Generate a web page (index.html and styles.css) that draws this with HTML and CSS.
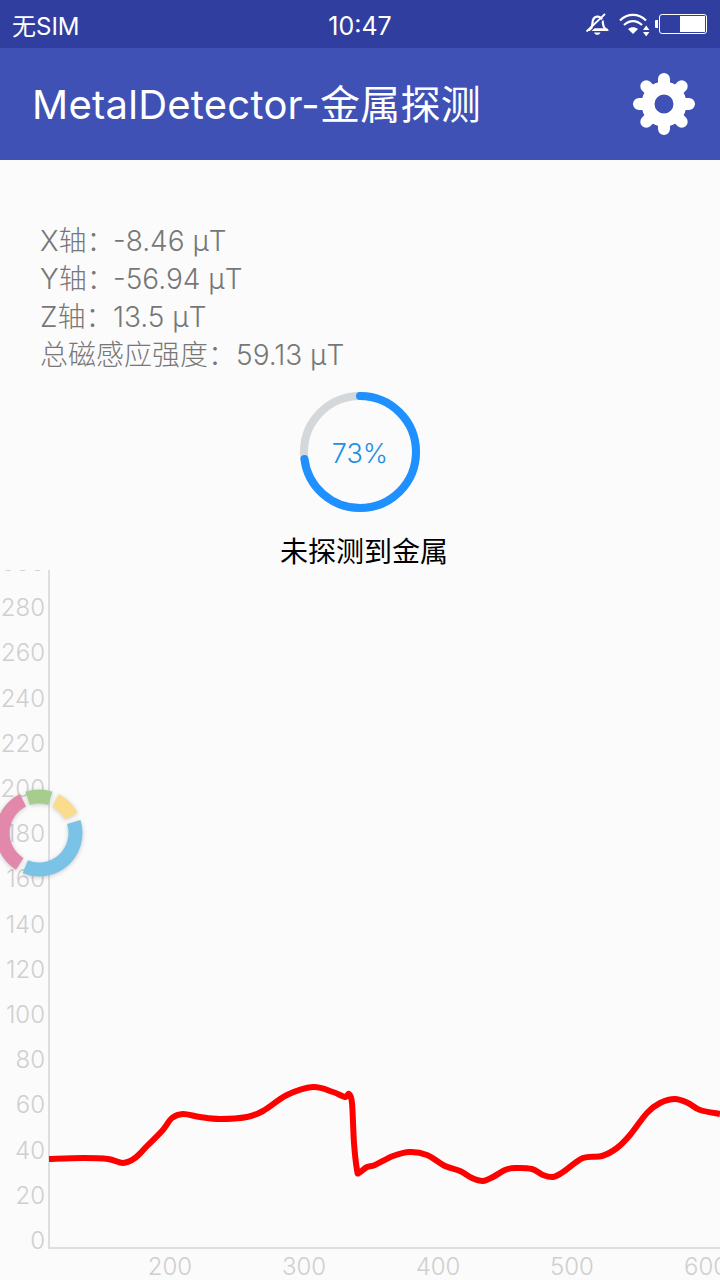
FILE: index.html
```html
<!DOCTYPE html>
<html lang="zh-CN">
<head>
  <meta charset="UTF-8" />
  <title>MetalDetector-金属探测</title>
  <meta name="viewport" content="width=device-width, initial-scale=1.0" />
  <link rel="stylesheet" href="styles.css">
</head>
<body>
  <div class="status-bar">
    <span class="carrier">无SIM</span>
    <span class="clock">10:47</span>
    <div class="status-icons">
      <svg class="icon-bell" width="24" height="24" viewBox="0 0 24 24">
        <path d="M5 17.500c2-1.600 2.400-3.400 2.500-6.500.1-3.500 2-5.800 4.500-6.300 3-.5 5.500 1.800 5.800 5.300.2 3.300.8 5.800 3.200 7.500z" fill="none" stroke="#fff" stroke-width="2.200"/>
        <path d="M4 16.500h18.500l.5 2.500H3.500z" fill="#fff"/>
        <path d="M9 20.500h6.500c-.6 1.500-1.800 2.300-3.200 2.300S9.600 22 9 20.500z" fill="#fff"/>
        <path d="M1.500 19.500L20 2" stroke="#fff" stroke-width="1.800"/>
        <path d="M3 21.500L21.500 4" stroke="#303f9f" stroke-width="1.200"/>
      </svg>
      <svg class="icon-wifi" width="32" height="24" viewBox="0 0 32 24">
        <path d="M1 8.500c7.500-7.500 18.500-7.500 26 0M5 13c5.500-5.300 12.500-5.300 18 0" fill="none" stroke="#fff" stroke-width="2.200"/>
        <path d="M9 17c3-2.500 7-2.500 10 0l-5 5z" fill="#fff"/>
        <path d="M24 18l3.200-4.500 3.200 4.500zM24 20h6.400l-3.200 4.500z" fill="#fff"/>
      </svg>
      <div class="battery">
        <div class="battery-nub"></div>
        <div class="battery-body"><div class="battery-level"></div></div>
      </div>
    </div>
  </div>

  <header class="app-bar">
    <h1>MetalDetector-金属探测</h1>
    <svg class="icon-gear" width="64" height="64" viewBox="-32 -32 64 64">
      <g stroke="#fff" stroke-width="12" stroke-linecap="round">
        <path d="M0-20V-25M0 20V25M-20 0H-25M20 0H25"/>
        <path d="M14.100-14.100L17.700-17.700M-14.100-14.100L-17.700-17.700M14.100 14.100L17.700 17.700M-14.100 14.100L-17.700 17.700"/>
      </g>
      <circle r="16" fill="none" stroke="#fff" stroke-width="13"/>
    </svg>
  </header>

  <main>
    <div class="readings">
      <p><span class="label">X轴：</span>-8.46 μT</p>
      <p><span class="label">Y轴：</span>-56.94 μT</p>
      <p><span class="label">Z轴：</span>13.5 μT</p>
      <p><span class="label-total">总磁感应强度：</span>59.13 μT</p>
    </div>

    <div class="progress">
      <svg width="120" height="120" viewBox="0 0 120 120">
        <circle cx="60" cy="60" r="56" fill="none" stroke="#d5d8da" stroke-width="8"/>
        <circle class="progress-bar" cx="60" cy="60" r="56" pathLength="100"/>
      </svg>
      <span class="progress-text">73%</span>
    </div>
    <p class="result">未探测到金属</p>

    <svg id="chart" class="chart" width="720" height="710" viewBox="0 570 720 710">
      <g id="y-labels" class="tick-labels y-labels"></g>
      <g id="x-labels" class="tick-labels x-labels"></g>
      <path class="axis" d="M49 570V1248H720"/>
      <path id="line" class="line"/>
    </svg>

    <svg class="float-ball" width="100" height="100" viewBox="-50 -50 100 100">
      <g fill="none" stroke-width="14">
        <path stroke="#e288aa" d="M-19.300 30.900A36.500 36.500 0 0 1-16 -32.800"/>
        <path stroke="#a6cd8d" d="M-11.300 -34.700A36.500 36.500 0 0 1 11.300 -34.700"/>
        <path stroke="#fbdc8c" d="M16.600 -32.500A36.500 36.500 0 0 1 32.200 -17.100"/>
        <path stroke="#7bc2e7" d="M34.800 -11A36.500 36.500 0 0 1-13.700 33.800"/>
      </g>
    </svg>
  </main>

  <script src="chart.js"></script>
</body>
</html>
```

FILE: styles.css
```css
* {
  box-sizing: border-box;
}
body {
  font-family: 'Inter', 'Noto Sans CJK SC', sans-serif;
  margin: 0;
  padding: 0;
  width: 720px;
  height: 1280px;
  overflow: hidden;
  background-color: #fbfbfb;
}
.status-bar {
  display: flex;
  align-items: center;
  justify-content: space-between;
  position: relative;
  height: 48px;
  padding: 0 12px;
  background-color: #303f9f;
  color: white;
  font-size: 24px;
}
.clock {
  position: absolute;
  left: 0;
  right: 0;
  margin-top: 4px;
  text-align: center;
  font-size: 25px;
}
.status-icons {
  display: flex;
  align-items: center;
  gap: 10px;
  margin-left: auto;
  margin-right: 1px;
}
.battery {
  display: flex;
  align-items: center;
  margin-left: -6px;
}
.battery-nub {
  width: 3px;
  height: 8px;
  background-color: white;
  border-radius: 1px 0 0 1px;
}
.battery-body {
  display: flex;
  justify-content: flex-end;
  width: 48px;
  height: 20px;
  margin-left: 1px;
  padding: 1px;
  border: 1px solid white;
  border-radius: 3px;
}
.battery-level {
  width: 25px;
  background-color: white;
}
.app-bar {
  display: flex;
  align-items: center;
  justify-content: space-between;
  height: 112px;
  padding: 0 24px 0 32px;
  background-color: #3f51b5;
  color: white;
}
.app-bar h1 {
  margin: -4px 0 0;
  font-size: 40px;
  font-weight: 400;
  letter-spacing: 0.25px;
}
main {
  position: relative;
}
.readings {
  padding: 62px 0 0 40px;
  color: #777;
  font-size: 28px;
  font-weight: 300;
  line-height: 38px;
}
.readings p {
  margin: 0;
}
.label {
  display: inline-block;
  width: 73px;
  white-space: nowrap;
}
.progress {
  position: relative;
  display: flex;
  align-items: center;
  justify-content: center;
  width: 120px;
  height: 120px;
  margin: 18px auto 0;
}
.progress svg {
  position: absolute;
  left: 0;
  top: 0;
}
.progress-bar {
  fill: none;
  stroke: #1e90ff;
  stroke-width: 8;
  stroke-linecap: round;
  stroke-dasharray: 73 100;
  transform: rotate(-90deg);
  transform-origin: 60px 60px;
}
.progress-text {
  position: relative;
  top: 1px;
  color: #1e8fe6;
  font-size: 27px;
  font-weight: 300;
}
.result {
  margin: 23px 0 0 8px;
  height: 35px;
  text-align: center;
  color: black;
  font-size: 28px;
  line-height: 35px;
}
.chart {
  display: block;
}
.tick-labels {
  fill: #cfcfcf;
  font-size: 24px;
  font-weight: 300;
}
.y-labels {
  text-anchor: end;
}
.x-labels {
  text-anchor: middle;
}
.axis {
  fill: none;
  stroke: #dedede;
  stroke-width: 2;
}
.line {
  fill: none;
  stroke: #ff0000;
  stroke-width: 6;
  stroke-linejoin: round;
}
.float-ball {
  position: absolute;
  left: -11px;
  top: 623px;
  filter: drop-shadow(0 1px 2px rgba(0, 0, 0, 0.2));
}
```

FILE: chart.js
```javascript
const SVG_NS = 'http://www.w3.org/2000/svg';

// traced from the recorded field strength, in page pixels
const points = [
  [49, 1159], [83, 1158], [108, 1159], [123, 1163], [135, 1158], [147, 1146],
  [162, 1131], [172, 1118], [183, 1114], [200, 1117], [220, 1119], [247, 1117],
  [263, 1111], [287, 1095], [313, 1087], [333, 1092], [345, 1097], [349, 1094],
  [352, 1103], [354, 1143], [357, 1170], [359, 1173], [367, 1167], [375, 1165],
  [393, 1156], [410, 1152], [427, 1155], [445, 1166], [460, 1171], [472, 1178],
  [483, 1181], [493, 1177], [505, 1170], [515, 1168], [532, 1169], [543, 1175],
  [553, 1177], [563, 1172], [583, 1158], [602, 1156], [617, 1148], [630, 1135],
  [647, 1113], [660, 1103], [675, 1099], [688, 1103], [700, 1110], [720, 1114]
];

function addLabel(parent, x, y, value) {
  const text = document.createElementNS(SVG_NS, 'text');
  text.setAttribute('x', x);
  text.setAttribute('y', y);
  text.textContent = value;
  parent.appendChild(text);
}

function renderLabels() {
  const yLabels = document.getElementById('y-labels');
  for (let v = 0; v <= 300; v += 20) {
    addLabel(yLabels, 45, 1249 - v * 2.26, v);
  }
  const xLabels = document.getElementById('x-labels');
  for (let v = 200; v <= 600; v += 100) {
    addLabel(xLabels, 170 + (v - 200) * 1.34, 1275, v);
  }
}

function renderLine() {
  let d = `M${points[0][0]} ${points[0][1]}`;
  for (let i = 0; i < points.length - 1; i++) {
    const p0 = points[i - 1] || points[i];
    const p1 = points[i];
    const p2 = points[i + 1];
    const p3 = points[i + 2] || p2;
    const c1x = p1[0] + (p2[0] - p0[0]) / 6;
    const c1y = p1[1] + (p2[1] - p0[1]) / 6;
    const c2x = p2[0] - (p3[0] - p1[0]) / 6;
    const c2y = p2[1] - (p3[1] - p1[1]) / 6;
    d += `C${c1x} ${c1y} ${c2x} ${c2y} ${p2[0]} ${p2[1]}`;
  }
  document.getElementById('line').setAttribute('d', d);
}

renderLabels();
renderLine();
```
